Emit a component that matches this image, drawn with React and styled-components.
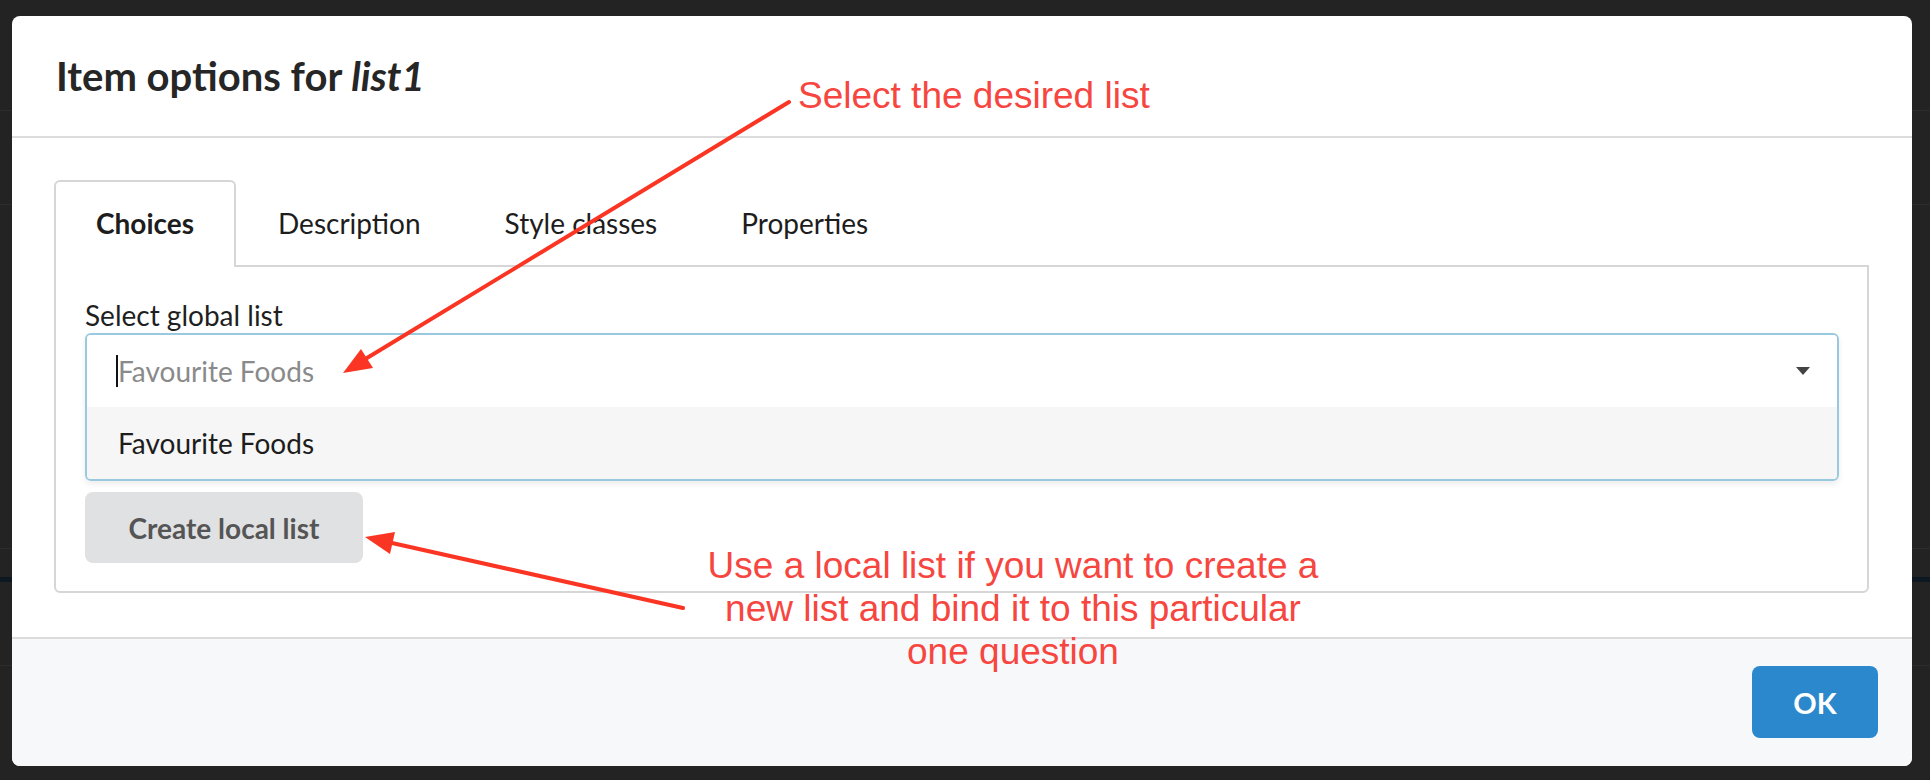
import React from "react";
import styled, { createGlobalStyle } from "styled-components";

const GlobalStyle = createGlobalStyle`
  html, body {
    margin: 0;
    padding: 0;
    background: #232323;
  }
  * {
    box-sizing: border-box;
  }
`;

const Page = styled.div`
  position: relative;
  width: 1930px;
  height: 780px;
  padding: 16px 18px 14px 12px;
  background-color: #232323;
  background-image:
    linear-gradient(#2c2c2c, #2c2c2c),
    linear-gradient(#2c2c2c, #2c2c2c),
    linear-gradient(#2c2c2c, #2c2c2c),
    linear-gradient(#0e1823, #0e1823),
    linear-gradient(#2c2c2c, #2c2c2c);
  background-repeat: no-repeat;
  background-size: 100% 1px, 100% 1px, 100% 1px, 100% 5px, 100% 1px;
  background-position: 0 110px, 0 204px, 0 548px, 0 577px, 0 665px;
  font-family: Lato, "Open Sans", sans-serif;
  overflow: hidden;
`;

const Dialog = styled.div`
  width: 1900px;
  height: 750px;
  background: #ffffff;
  border-radius: 8px;
  display: flex;
  flex-direction: column;
  overflow: hidden;
`;

const Header = styled.div`
  height: 122px;
  flex-shrink: 0;
  display: flex;
  align-items: center;
  padding-left: 44px;
  border-bottom: 2px solid #dcdcdc;
`;

const Title = styled.h2`
  margin: 0;
  font-size: 40px;
  font-weight: 700;
  color: #262626;

  em {
    font-style: italic;
  }
`;

const Body = styled.div`
  flex: 1;
  padding: 42px 43px 44px 42px;
`;

const TabList = styled.div`
  display: flex;
  height: 85px;
`;

const Tab = styled.div`
  height: 87px;
  padding: 0 40px 4px;
  display: flex;
  align-items: center;
  justify-content: center;
  font-size: 28px;
  color: #1d1d1d;
  font-weight: ${(p) => (p.$active ? 700 : 400)};
  background: ${(p) => (p.$active ? "#fff" : "transparent")};
  border: 2px solid ${(p) => (p.$active ? "#d6d6d6" : "transparent")};
  border-bottom: none;
  border-radius: 6px 6px 0 0;
  position: relative;
  z-index: ${(p) => (p.$active ? 1 : 0)};
`;

const Panel = styled.div`
  border: 2px solid #d6d6d6;
  border-radius: 0 0 6px 6px;
  padding: 30px 28px 28px 29px;
`;

const Label = styled.div`
  font-size: 28px;
  line-height: 36px;
  color: #1f1f1f;
`;

const Select = styled.div`
  border: 2px solid #98c9de;
  border-radius: 6px;
  overflow: hidden;
  box-shadow: 0 3px 6px rgba(0, 0, 0, 0.08);
`;

const SelectInput = styled.div`
  height: 72px;
  display: flex;
  align-items: center;
  padding: 0 27px 0 29px;
  background: #fff;
`;

const Caret = styled.span`
  display: inline-block;
  width: 2px;
  height: 32px;
  background: #111;
`;

const Placeholder = styled.span`
  flex: 1;
  font-size: 28px;
  color: #8a8a8a;
`;

const Arrow = styled.span`
  width: 0;
  height: 0;
  border-left: 7px solid transparent;
  border-right: 7px solid transparent;
  border-top: 8px solid #444;
`;

const Option = styled.div`
  height: 72px;
  display: flex;
  align-items: center;
  padding-left: 31px;
  background: #f6f6f6;
  font-size: 28px;
  color: #1d1d1d;
`;

const GreyButton = styled.button`
  margin-top: 11px;
  width: 278px;
  height: 71px;
  border: none;
  border-radius: 8px;
  background: #e0e1e3;
  color: #555;
  font-family: Lato, sans-serif;
  font-size: 28px;
  font-weight: 700;
`;

const Footer = styled.div`
  height: 129px;
  flex-shrink: 0;
  border-top: 2px solid #dcdcdc;
  background: #f7f8fa;
  display: flex;
  justify-content: flex-end;
  align-items: flex-start;
  padding: 27px 34px 0 0;
`;

const PrimaryButton = styled.button`
  width: 126px;
  height: 72px;
  border: none;
  border-radius: 8px;
  background: #2b88cd;
  color: #fff;
  font-family: Lato, sans-serif;
  font-size: 29px;
  font-weight: 700;
`;

const Overlay = styled.svg`
  position: absolute;
  left: 0;
  top: 0;
  pointer-events: none;
`;

const Note = styled.div`
  position: absolute;
  left: ${(p) => p.$x}px;
  top: ${(p) => p.$y}px;
  width: ${(p) => p.$w}px;
  text-align: ${(p) => p.$align || "left"};
  font-family: "Liberation Sans", Arial, sans-serif;
  font-size: 37px;
  line-height: 43px;
  color: #f6463f;
  white-space: nowrap;
`;

const tabs = ["Choices", "Description", "Style classes", "Properties"];

export default function App() {
  return (
    <>
      <GlobalStyle />
      <Page>
        <Dialog>
          <Header>
            <Title>
              Item options for <em>list1</em>
            </Title>
          </Header>
          <Body>
            <TabList>
              {tabs.map((t, i) => (
                <Tab key={t} $active={i === 0}>
                  {t}
                </Tab>
              ))}
            </TabList>
            <Panel>
              <Label>Select global list</Label>
              <Select>
                <SelectInput>
                  <Caret />
                  <Placeholder>Favourite Foods</Placeholder>
                  <Arrow />
                </SelectInput>
                <Option>Favourite Foods</Option>
              </Select>
              <GreyButton>Create local list</GreyButton>
            </Panel>
          </Body>
          <Footer>
            <PrimaryButton>OK</PrimaryButton>
          </Footer>
        </Dialog>

        <Overlay width="1930" height="780" viewBox="0 0 1930 780">
          <line x1="789" y1="102" x2="367" y2="358" stroke="#fb3523" strokeWidth="4" strokeLinecap="round" />
          <polygon points="343,373 373,368 361,349" fill="#fb3523" />
          <line x1="683" y1="608" x2="392" y2="543" stroke="#fb3523" strokeWidth="4" strokeLinecap="round" />
          <polygon points="365,537 395,532 390,554" fill="#fb3523" />
        </Overlay>

        <Note $x={798} $y={74}>Select the desired list</Note>
        <Note $x={663} $y={544} $w={700} $align="center">
          Use a local list if you want to create a
          <br />
          new list and bind it to this particular
          <br />
          one question
        </Note>
      </Page>
    </>
  );
}
